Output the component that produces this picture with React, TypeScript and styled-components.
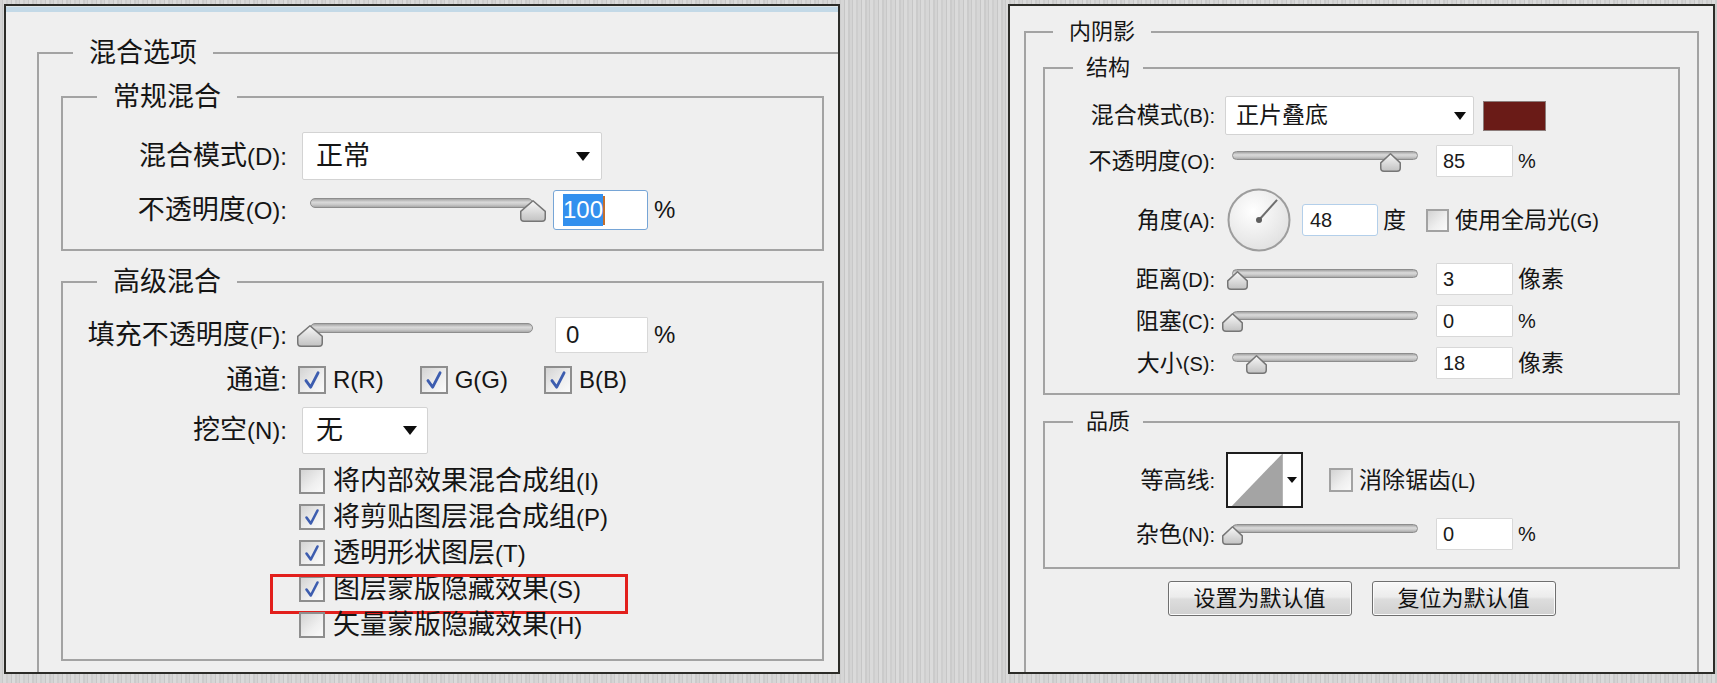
import React from "react";
import styled, { createGlobalStyle, css } from "styled-components";

const GlobalStyle = createGlobalStyle`
  html, body { margin: 0; padding: 0; }
  body {
    width: 1717px;
    height: 683px;
    overflow: hidden;
    background-color: #d2d2d2;
    background-image: repeating-linear-gradient(90deg,
      #d4d4d4 0px, #d4d4d4 2px,
      #c8c8c8 2px, #c8c8c8 3px,
      #dadada 3px, #dadada 6px,
      #cecece 6px, #cecece 8px,
      #d6d6d6 8px, #d6d6d6 11px,
      #c6c6c6 11px, #c6c6c6 12px,
      #dbdbdb 12px, #dbdbdb 15px,
      #cbcbcb 15px, #cbcbcb 17px);
    font-family: "Liberation Sans", "Noto Sans CJK SC", sans-serif;
    color: #151515;
  }
`;

const Stage = styled.main`
  display: flex;
  align-items: flex-start;
  gap: 168px;
  padding: 4px 0 0 4px;
`;

type PanelProps = {
  $width: number;
  $padding: string;
  $cjk: number;
  $latin: number;
  $num: number;
  $strip?: boolean;
};

const Panel = styled.section<PanelProps>`
  --cjk: ${(p) => p.$cjk}px;
  --latin: ${(p) => p.$latin}px;
  --num: ${(p) => p.$num}px;
  box-sizing: border-box;
  flex: none;
  width: ${(p) => p.$width}px;
  height: 670px;
  padding: ${(p) => p.$padding};
  display: flex;
  flex-direction: column;
  border: 2px solid #2c2c28;
  background: ${(p) =>
    p.$strip
      ? "linear-gradient(#dfe6ea 0 1px, #c3d9e7 1px 6px, #efefef 6px)"
      : "#efefef"};
  font-size: var(--cjk);
  overflow: hidden;
`;

const Group = styled.fieldset<{
  $padding: string;
  $mt?: number;
  $openRight?: boolean;
  $openBottom?: boolean;
}>`
  margin: ${(p) => p.$mt ?? 0}px 0 0 0;
  padding: ${(p) => p.$padding};
  min-width: 0;
  border: 2px solid #a3a3a3;
  ${(p) => p.$openRight && css`border-right: none;`}
  ${(p) =>
    p.$openBottom &&
    css`
      border-bottom: none;
      flex: 1;
    `}
`;

const Legend = styled.legend<{ $offset: number; $pad: number; $lh: number; $fs?: number }>`
  margin-left: ${(p) => p.$offset}px;
  padding: 0 ${(p) => p.$pad}px;
  line-height: ${(p) => p.$lh}px;
  font-size: ${(p) => (p.$fs ? `${p.$fs}px` : "var(--cjk)")};
  color: #151515;
`;

const Form = styled.div<{ $gap: number; $labelW: number; $labelGap: number }>`
  --label-w: ${(p) => p.$labelW}px;
  --label-gap: ${(p) => p.$labelGap}px;
  display: flex;
  flex-direction: column;
  gap: ${(p) => p.$gap}px;
`;

const Field = styled.div<{ $h?: number }>`
  display: grid;
  grid-template-columns: var(--label-w) auto;
  column-gap: var(--label-gap);
  align-items: center;
  justify-content: start;
  ${(p) => p.$h && css`height: ${p.$h}px;`}
`;

const Label = styled.span`
  justify-self: end;
  white-space: nowrap;
  line-height: 1;
`;

const Key = styled.span`
  font-size: var(--latin);
`;

const Controls = styled.div<{ $ml?: number }>`
  display: flex;
  align-items: center;
  margin-left: ${(p) => p.$ml ?? 0}px;
`;

const Select = styled.div<{ $w: number; $h: number; $ml: number; $padL: number; $padR: number }>`
  box-sizing: border-box;
  flex: none;
  width: ${(p) => p.$w}px;
  height: ${(p) => p.$h}px;
  margin-left: ${(p) => p.$ml}px;
  padding: 0 ${(p) => p.$padR}px 0 ${(p) => p.$padL}px;
  display: flex;
  align-items: center;
  justify-content: space-between;
  background: #fff;
  border: 1px solid #d3d3d3;
  border-radius: 2px;
  line-height: 1;
  white-space: nowrap;
`;

const DropArrow = styled.span<{ $w: number }>`
  flex: none;
  width: 0;
  height: 0;
  border-left: ${(p) => p.$w / 2}px solid transparent;
  border-right: ${(p) => p.$w / 2}px solid transparent;
  border-top: ${(p) => Math.round(p.$w * 0.6)}px solid #0d0d0d;
`;

const SLIDER = {
  lg: { frame: 240, pad: 12, track: 223, trackH: 10, thumbW: 26, thumbH: 22, h: 24 },
  sm: { frame: 200, pad: 7, track: 186, trackH: 9, thumbW: 21, thumbH: 19, h: 21 },
};

const SliderFrame = styled.div<{ $w: number; $h: number; $pad: number }>`
  position: relative;
  flex: none;
  box-sizing: border-box;
  width: ${(p) => p.$w}px;
  height: ${(p) => p.$h}px;
  padding-left: ${(p) => p.$pad}px;
`;

const Track = styled.div<{ $w: number; $h: number }>`
  box-sizing: border-box;
  width: ${(p) => p.$w}px;
  height: ${(p) => p.$h}px;
  border-radius: ${(p) => p.$h / 2}px;
  border: 1px solid #8d8d8d;
  background: linear-gradient(#a4a4a4, #dadada 40%, #c9c9c9 70%, #a9a9a9);
`;

const ThumbMark = styled.svg`
  position: absolute;
  top: 2px;
  display: block;
  overflow: visible;
`;

function Slider({ pct, size }: { pct: number; size: "lg" | "sm" }) {
  const s = SLIDER[size];
  const left = s.pad + (pct / 100) * s.track - s.thumbW / 2;
  const w = s.thumbW;
  const h = s.thumbH;
  const gid = `thumb-grad-${size}`;
  return (
    <SliderFrame $w={s.frame} $h={s.h} $pad={s.pad}>
      <Track $w={s.track} $h={s.trackH} />
      <ThumbMark width={w} height={h} viewBox={`0 0 ${w} ${h}`} style={{ left }}>
        <defs>
          <linearGradient id={gid} x1="0" y1="0" x2="0" y2="1">
            <stop offset="0" stopColor="#f8f8f8" />
            <stop offset="1" stopColor="#c2c2c2" />
          </linearGradient>
        </defs>
        <path
          d={`M0.75 ${h * 0.52} L${w / 2} 0.75 L${w - 0.75} ${h * 0.52} V${h - 4} Q${w - 0.75} ${h - 0.75} ${w - 4} ${h - 0.75} H4 Q0.75 ${h - 0.75} 0.75 ${h - 4} Z`}
          fill={`url(#${gid})`}
          stroke="#767676"
          strokeWidth="1.5"
          strokeLinejoin="round"
        />
      </ThumbMark>
    </SliderFrame>
  );
}

const NumberBox = styled.div<{ $w: number; $h: number; $ml: number; $pl: number; $focus?: "strong" | "soft" }>`
  box-sizing: border-box;
  flex: none;
  width: ${(p) => p.$w}px;
  height: ${(p) => p.$h}px;
  margin-left: ${(p) => p.$ml}px;
  padding-left: ${(p) => p.$pl}px;
  display: flex;
  align-items: center;
  background: #fff;
  border: 1px solid
    ${(p) => (p.$focus === "strong" ? "#76a5d6" : p.$focus === "soft" ? "#b3cfea" : "#d8d8d8")};
  border-radius: ${(p) => (p.$focus ? 3 : 1)}px;
  font-size: var(--num);
  line-height: 1;
  color: #1a1a1a;
`;

const Selection = styled.span`
  background: #3390ee;
  color: #fff;
  padding: 4px 0;
`;

const TextCaret = styled.span`
  width: 2px;
  height: 29px;
  background: #c46f2c;
`;

const Unit = styled.span<{ $ml: number; $cjk?: boolean }>`
  flex: none;
  margin-left: ${(p) => p.$ml}px;
  font-size: ${(p) => (p.$cjk ? "var(--cjk)" : "var(--num)")};
  line-height: 1;
  white-space: nowrap;
`;

const Box = styled.span<{ $size: number; $border: string }>`
  box-sizing: border-box;
  flex: none;
  width: ${(p) => p.$size}px;
  height: ${(p) => p.$size}px;
  display: flex;
  align-items: center;
  justify-content: center;
  border: 2px solid ${(p) => p.$border};
  background: linear-gradient(135deg, #d3d3d3, #efefef 60%, #fafafa);
`;

function CheckBox({ checked, size, border = "#8e8e8e" }: { checked?: boolean; size: number; border?: string }) {
  return (
    <Box $size={size} $border={border}>
      {checked && (
        <svg width={size - 6} height={size - 6} viewBox="0 0 20 20">
          <path
            d="M4.5 10.5 L8.8 16.5 L15.5 3.5"
            fill="none"
            stroke="#3d5daf"
            strokeWidth="2.6"
            strokeLinecap="round"
            strokeLinejoin="round"
          />
        </svg>
      )}
    </Box>
  );
}

const CheckRow = styled.label<{ $h?: number; $gap: number; $ml?: number; $marked?: boolean }>`
  position: relative;
  display: flex;
  align-items: center;
  gap: ${(p) => p.$gap}px;
  margin-left: ${(p) => p.$ml ?? 0}px;
  ${(p) => p.$h && css`height: ${p.$h}px;`}
  white-space: nowrap;
  line-height: 1;
  ${(p) =>
    p.$marked &&
    css`
      &::after {
        content: "";
        position: absolute;
        left: -29px;
        top: 3px;
        width: 358px;
        height: 40px;
        box-sizing: border-box;
        border: 3px solid #e21f1c;
        pointer-events: none;
      }
    `}
`;

const CheckList = styled.div`
  display: flex;
  flex-direction: column;
  margin-left: 1px;
`;

const Channels = styled.div`
  display: flex;
  align-items: center;
  gap: 36px;
`;

const LatinText = styled.span`
  font-size: var(--latin);
`;

const Swatch = styled.span<{ $color: string }>`
  flex: none;
  box-sizing: border-box;
  width: 63px;
  height: 30px;
  margin-left: 9px;
  border: 1px solid #8c7c7a;
  background: ${(p) => p.$color};
`;

const DialFace = styled.svg`
  flex: none;
  display: block;
  margin-left: 2px;
`;

function AngleDial({ deg }: { deg: number }) {
  const r = (deg * Math.PI) / 180;
  const x2 = 32 + 27 * Math.cos(r);
  const y2 = 32 - 27 * Math.sin(r);
  return (
    <DialFace width={64} height={64} viewBox="0 0 64 64">
      <defs>
        <radialGradient id="dial-face" cx="40%" cy="35%" r="75%">
          <stop offset="0" stopColor="#ffffff" />
          <stop offset="1" stopColor="#dedede" />
        </radialGradient>
      </defs>
      <circle cx="32" cy="32" r="30.5" fill="url(#dial-face)" stroke="#9d9d9d" strokeWidth="2" />
      <line x1="32" y1="32" x2={x2} y2={y2} stroke="#6e6e6e" strokeWidth="2" />
      <circle cx="32" cy="32" r="3" fill="#5e5e5e" />
    </DialFace>
  );
}

const Contour = styled.div`
  box-sizing: border-box;
  flex: none;
  width: 77px;
  height: 56px;
  margin-left: 1px;
  display: flex;
  border: 2px solid #1e1e1e;
  background: #fff;
`;

const ContourPreview = styled.svg`
  display: block;
  flex: 1;
  height: 100%;
`;

const ContourArrowCell = styled.div`
  width: 18px;
  display: flex;
  align-items: center;
  justify-content: center;
  border-left: 1px solid #b5b5b5;
`;

const ButtonBar = styled.div`
  display: flex;
  justify-content: center;
  gap: 20px;
  margin-top: 12px;
`;

const PushButton = styled.button`
  box-sizing: border-box;
  width: 184px;
  height: 35px;
  padding: 0;
  font-family: "Liberation Sans", "Noto Sans CJK SC", sans-serif;
  font-size: 22px;
  line-height: 1;
  color: #111;
  border: 1px solid #6f6f6f;
  border-radius: 3px;
  background: linear-gradient(#f8f8f8, #ececec 45%, #dddddd 52%, #d0d0d0);
  box-shadow: inset 0 0 0 1px #fbfbfb;
`;

export default function App() {
  return (
    <>
      <GlobalStyle />
      <Stage>
        <Panel $width={836} $padding="32px 0 0 31px" $cjk={27} $latin={24} $num={24} $strip>
          <Group $padding="14px 14px 0 22px" $openRight $openBottom>
            <Legend $offset={12} $pad={16} $lh={30}>混合选项</Legend>

            <Group $padding="20px 0 19px 0">
              <Legend $offset={34} $pad={16} $lh={30}>常规混合</Legend>
              <Form $gap={10} $labelW={224} $labelGap={11}>
                <Field $h={48}>
                  <Label>
                    混合模式<Key>(D):</Key>
                  </Label>
                  <Select $w={300} $h={48} $ml={4} $padL={13} $padR={11}>
                    正常
                    <DropArrow $w={15} />
                  </Select>
                </Field>
                <Field $h={40}>
                  <Label>
                    不透明度<Key>(O):</Key>
                  </Label>
                  <Controls>
                    <Slider pct={100} size="lg" />
                    <NumberBox $w={95} $h={40} $ml={15} $pl={9} $focus="strong">
                      <Selection>100</Selection>
                      <TextCaret />
                    </NumberBox>
                    <Unit $ml={6}>%</Unit>
                  </Controls>
                </Field>
              </Form>
            </Group>

            <Group $padding="20px 0 16px 0" $mt={16}>
              <Legend $offset={34} $pad={16} $lh={30}>高级混合</Legend>
              <Form $gap={9} $labelW={224} $labelGap={11}>
                <Field $h={36}>
                  <Label>
                    填充不透明度<Key>(F):</Key>
                  </Label>
                  <Controls>
                    <Slider pct={0} size="lg" />
                    <NumberBox $w={93} $h={36} $ml={17} $pl={10}>0</NumberBox>
                    <Unit $ml={6}>%</Unit>
                  </Controls>
                </Field>
                <Field $h={36}>
                  <Label>
                    通道<Key>:</Key>
                  </Label>
                  <Channels>
                    <CheckRow $gap={7}>
                      <CheckBox checked size={28} />
                      <LatinText>R(R)</LatinText>
                    </CheckRow>
                    <CheckRow $gap={7}>
                      <CheckBox checked size={28} />
                      <LatinText>G(G)</LatinText>
                    </CheckRow>
                    <CheckRow $gap={7}>
                      <CheckBox checked size={28} />
                      <LatinText>B(B)</LatinText>
                    </CheckRow>
                  </Channels>
                </Field>
                <Field $h={47}>
                  <Label>
                    挖空<Key>(N):</Key>
                  </Label>
                  <Select $w={126} $h={47} $ml={4} $padL={13} $padR={10}>
                    无
                    <DropArrow $w={15} />
                  </Select>
                </Field>
                <Field>
                  <span />
                  <CheckList>
                    <CheckRow $h={36} $gap={8}>
                      <CheckBox size={26} />
                      <span>
                        将内部效果混合成组<Key>(I)</Key>
                      </span>
                    </CheckRow>
                    <CheckRow $h={36} $gap={8}>
                      <CheckBox checked size={26} />
                      <span>
                        将剪贴图层混合成组<Key>(P)</Key>
                      </span>
                    </CheckRow>
                    <CheckRow $h={36} $gap={8}>
                      <CheckBox checked size={26} />
                      <span>
                        透明形状图层<Key>(T)</Key>
                      </span>
                    </CheckRow>
                    <CheckRow $h={36} $gap={8} $marked>
                      <CheckBox checked size={26} />
                      <span>
                        图层蒙版隐藏效果<Key>(S)</Key>
                      </span>
                    </CheckRow>
                    <CheckRow $h={36} $gap={8}>
                      <CheckBox size={26} />
                      <span>
                        矢量蒙版隐藏效果<Key>(H)</Key>
                      </span>
                    </CheckRow>
                  </CheckList>
                </Field>
              </Form>
            </Group>
          </Group>
        </Panel>

        <Panel $width={707} $padding="13px 14px 0 14px" $cjk={23} $latin={20} $num={20}>
          <Group $padding="10px 17px 0 17px" $openBottom>
            <Legend $offset={10} $pad={16} $lh={26} $fs={22}>内阴影</Legend>

            <Group $padding="15px 0 14px 0">
              <Legend $offset={28} $pad={13} $lh={26} $fs={22}>结构</Legend>
              <Form $gap={10} $labelW={170} $labelGap={10}>
                <Field $h={39}>
                  <Label>
                    混合模式<Key>(B):</Key>
                  </Label>
                  <Controls>
                    <Select $w={249} $h={39} $ml={0} $padL={10} $padR={7}>
                      正片叠底
                      <DropArrow $w={13} />
                    </Select>
                    <Swatch $color="#6a1b17" />
                  </Controls>
                </Field>
                <Field $h={32}>
                  <Label>
                    不透明度<Key>(O):</Key>
                  </Label>
                  <Controls>
                    <Slider pct={85} size="sm" />
                    <NumberBox $w={77} $h={32} $ml={11} $pl={6}>85</NumberBox>
                    <Unit $ml={5}>%</Unit>
                  </Controls>
                </Field>
                <Field $h={66}>
                  <Label>
                    角度<Key>(A):</Key>
                  </Label>
                  <Controls>
                    <AngleDial deg={48} />
                    <NumberBox $w={76} $h={32} $ml={11} $pl={7} $focus="soft">48</NumberBox>
                    <Unit $ml={5} $cjk>度</Unit>
                    <CheckRow $gap={6} $ml={20}>
                      <CheckBox size={23} border="#a2a2a2" />
                      <span>
                        使用全局光<Key>(G)</Key>
                      </span>
                    </CheckRow>
                  </Controls>
                </Field>
                <Field $h={32}>
                  <Label>
                    距离<Key>(D):</Key>
                  </Label>
                  <Controls>
                    <Slider pct={3} size="sm" />
                    <NumberBox $w={77} $h={32} $ml={11} $pl={6}>3</NumberBox>
                    <Unit $ml={5} $cjk>像素</Unit>
                  </Controls>
                </Field>
                <Field $h={32}>
                  <Label>
                    阻塞<Key>(C):</Key>
                  </Label>
                  <Controls>
                    <Slider pct={0} size="sm" />
                    <NumberBox $w={77} $h={32} $ml={11} $pl={6}>0</NumberBox>
                    <Unit $ml={5}>%</Unit>
                  </Controls>
                </Field>
                <Field $h={32}>
                  <Label>
                    大小<Key>(S):</Key>
                  </Label>
                  <Controls>
                    <Slider pct={13} size="sm" />
                    <NumberBox $w={77} $h={32} $ml={11} $pl={6}>18</NumberBox>
                    <Unit $ml={5} $cjk>像素</Unit>
                  </Controls>
                </Field>
              </Form>
            </Group>

            <Group $padding="17px 0 17px 0" $mt={14}>
              <Legend $offset={28} $pad={13} $lh={26} $fs={22}>品质</Legend>
              <Form $gap={10} $labelW={170} $labelGap={10}>
                <Field $h={56}>
                  <Label>
                    等高线<Key>:</Key>
                  </Label>
                  <Controls>
                    <Contour>
                      <ContourPreview viewBox="0 0 56 52" preserveAspectRatio="none">
                        <polygon points="4,52 56,0 56,52" fill="#a4a4a4" />
                      </ContourPreview>
                      <ContourArrowCell>
                        <DropArrow $w={10} />
                      </ContourArrowCell>
                    </Contour>
                    <CheckRow $gap={6} $ml={26}>
                      <CheckBox size={24} border="#a2a2a2" />
                      <span>
                        消除锯齿<Key>(L)</Key>
                      </span>
                    </CheckRow>
                  </Controls>
                </Field>
                <Field $h={32}>
                  <Label>
                    杂色<Key>(N):</Key>
                  </Label>
                  <Controls>
                    <Slider pct={0} size="sm" />
                    <NumberBox $w={77} $h={32} $ml={11} $pl={6}>0</NumberBox>
                    <Unit $ml={5}>%</Unit>
                  </Controls>
                </Field>
              </Form>
            </Group>

            <ButtonBar>
              <PushButton type="button">设置为默认值</PushButton>
              <PushButton type="button">复位为默认值</PushButton>
            </ButtonBar>
          </Group>
        </Panel>
      </Stage>
    </>
  );
}
